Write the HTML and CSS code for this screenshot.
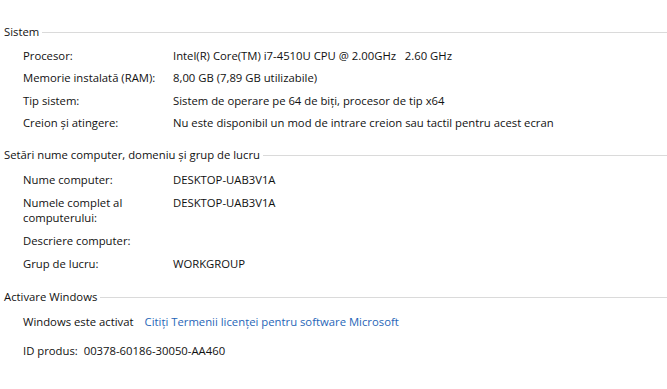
FILE: index.html
```html
<!DOCTYPE html>
<html lang="ro">
<head>
  <meta charset="UTF-8" />
  <title>Sistem</title>
  <link rel="stylesheet" href="styles.css">
</head>
<body>
  <div class="panel">
    <div class="section">
      <div class="heading"><span>Sistem</span><div class="rule"></div></div>
      <div class="rows tight">
        <div class="label">Procesor:</div>
        <div class="value">Intel(R) Core(TM) i7-4510U CPU @ 2.00GHz &nbsp; 2.60 GHz</div>
        <div class="label">Memorie instalată (RAM):</div>
        <div class="value">8,00 GB (7,89 GB utilizabile)</div>
        <div class="label">Tip sistem:</div>
        <div class="value">Sistem de operare pe 64 de biți, procesor de tip x64</div>
        <div class="label">Creion și atingere:</div>
        <div class="value">Nu este disponibil un mod de intrare creion sau tactil pentru acest ecran</div>
      </div>
    </div>

    <div class="section">
      <div class="heading"><span>Setări nume computer, domeniu și grup de lucru</span><div class="rule"></div></div>
      <div class="rows">
        <div class="label">Nume computer:</div>
        <div class="value">DESKTOP-UAB3V1A</div>
        <div class="label narrow">Numele complet al computerului:</div>
        <div class="value">DESKTOP-UAB3V1A</div>
        <div class="label">Descriere computer:</div>
        <div class="value"></div>
        <div class="label">Grup de lucru:</div>
        <div class="value">WORKGROUP</div>
      </div>
    </div>

    <div class="section">
      <div class="heading"><span>Activare Windows</span><div class="rule"></div></div>
      <div class="activation">
        <div class="line">
          <span>Windows este activat</span>
          <a href="#" class="link">Citiți Termenii licenței pentru software Microsoft</a>
        </div>
        <div class="line id">ID produs:&nbsp; 00378-60186-30050-AA460</div>
      </div>
    </div>
  </div>
</body>
</html>
```

FILE: styles.css
```css
body { margin: 0; background: #fff; color: #111; font-family: "Open Sans", sans-serif; font-size: 11.3px; line-height: 15px; }
.panel { padding: 24px 0 0 4px; }
.section { margin-bottom: 18px; }
.section:first-child { margin-bottom: 17px; }
.heading { display: flex; align-items: center; gap: 3px; margin-bottom: 9px; }
.heading span { white-space: nowrap; }
.rule { flex: 1; border-top: 1px solid #dadada; margin-top: 2px; }
.rows { display: grid; grid-template-columns: 150px 1fr; row-gap: 8px; padding-left: 19px; padding-top: 1px; }
.rows.tight { row-gap: 7.3px; padding-top: 0; }
.label { white-space: nowrap; }
.label.narrow { white-space: normal; width: 110px; }
.activation { padding-left: 19px; padding-top: 1px; }
.line { display: flex; gap: 11px; }
.line.id { display: block; margin-top: 14px; }
.link { color: #1f66b8; text-decoration: none; }
```
